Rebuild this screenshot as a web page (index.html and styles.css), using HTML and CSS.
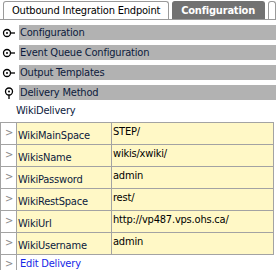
FILE: index.html
```html
<!DOCTYPE html>
<html lang="en">
<head>
    <meta charset="UTF-8">
    <title>Endpoint configuration</title>
    <link rel="stylesheet" href="styles.css">
</head>
<body>
    <div class="tabs">
        <div class="tab">Outbound Integration Endpoint</div>
        <div class="tab active">Configuration</div>
        <div class="tab stub"></div>
    </div>

    <div class="section">
        <svg class="pin" viewBox="0 0 16 12"><circle cx="6" cy="6" r="3.5"></circle><circle class="dot" cx="6" cy="6" r="1"></circle><line x1="9.5" y1="6" x2="14" y2="6"></line></svg>
        <div class="bar">Configuration</div>
    </div>
    <div class="section">
        <svg class="pin" viewBox="0 0 16 12"><circle cx="6" cy="6" r="3.5"></circle><circle class="dot" cx="6" cy="6" r="1"></circle><line x1="9.5" y1="6" x2="14" y2="6"></line></svg>
        <div class="bar">Event Queue Configuration</div>
    </div>
    <div class="section">
        <svg class="pin" viewBox="0 0 16 12"><circle cx="6" cy="6" r="3.5"></circle><circle class="dot" cx="6" cy="6" r="1"></circle><line x1="9.5" y1="6" x2="14" y2="6"></line></svg>
        <div class="bar">Output Templates</div>
    </div>
    <div class="section">
        <svg class="pin" viewBox="0 0 16 12"><circle cx="8" cy="4.5" r="3.5"></circle><circle class="dot" cx="8" cy="4.5" r="1"></circle><line x1="8" y1="8" x2="8" y2="12"></line></svg>
        <div class="bar">Delivery Method</div>
    </div>

    <div class="method">WikiDelivery</div>

    <table class="props">
        <tr><td class="arrow">&gt;</td><td class="name">WikiMainSpace</td><td class="value">STEP/</td></tr>
        <tr><td class="arrow">&gt;</td><td class="name">WikisName</td><td class="value">wikis/xwiki/</td></tr>
        <tr><td class="arrow">&gt;</td><td class="name">WikiPassword</td><td class="value">admin</td></tr>
        <tr><td class="arrow">&gt;</td><td class="name">WikiRestSpace</td><td class="value">rest/</td></tr>
        <tr><td class="arrow">&gt;</td><td class="name">WikiUrl</td><td class="value">http://vp487.vps.ohs.ca/</td></tr>
        <tr><td class="arrow">&gt;</td><td class="name">WikiUsername</td><td class="value">admin</td></tr>
        <tr class="edit"><td class="arrow">&gt;</td><td colspan="2"><a href="#">Edit Delivery</a></td></tr>
    </table>
</body>
</html>
```

FILE: styles.css
```css
*{
    margin: 0;
    padding: 0;
    box-sizing: border-box;
}

body{
    width: 276px;
    background: #fff;
    font-family: "DejaVu Sans Condensed", "DejaVu Sans", sans-serif;
    font-size: 11px;
    letter-spacing: -0.2px;
    color: #0c1a3c;
    overflow: hidden;
}

.tabs{
    display: flex;
    align-items: flex-end;
    gap: 3px;
    height: 20px;
    padding-left: 3px;
    border-bottom: 1px solid #9a9a9a;
}
.tab{
    height: 18px;
    padding: 2px 8px 0 8px;
    border: 1px solid #9a9a9a;
    border-bottom: none;
    border-radius: 3px 3px 0 0;
    color: #000;
    white-space: nowrap;
}
.tab.active{
    padding: 2px 9px 0 8px;
    background: #727272;
    border-color: #727272;
    color: #fff;
    font-weight: bold;
}
.tab.stub{
    flex: 1;
    padding: 0;
}

.section{
    display: flex;
    align-items: center;
    margin-top: 5px;
    height: 15px;
}
.section .pin{
    width: 16px;
    height: 12px;
    margin: 0 2px 0 1px;
    fill: #fff;
    stroke: #000;
    stroke-width: 1.3;
}
.section .pin .dot{
    fill: #000;
    stroke: none;
}
.section .bar{
    flex: 1;
    height: 15px;
    line-height: 15px;
    padding-left: 1px;
    background: #b2b2b2;
}

.method{
    height: 22px;
    padding: 4px 0 0 16px;
}

.props{
    width: 274px;
    border-collapse: collapse;
}
.props td{
    height: 22px;
    border: 1px solid #a3a3a3;
    vertical-align: bottom;
    padding: 0 0 2px 1px;
}
.props td.arrow{
    width: 16px;
    padding: 0 0 3px 4px;
    color: #8a8a8a;
    vertical-align: middle;
    background: #fff;
}
.props td.name{
    width: 95px;
    background: #fff8c6;
}
.props td.value{
    vertical-align: top;
    padding: 2px 0 0 1px;
    background: #fff8c6;
    color: #000;
}
.props .edit td{
    border-bottom: none;
    border-right: none;
    height: 20px;
    vertical-align: middle;
}
.props .edit a{
    padding-left: 2px;
    color: #1526e6;
    text-decoration: none;
}
```
